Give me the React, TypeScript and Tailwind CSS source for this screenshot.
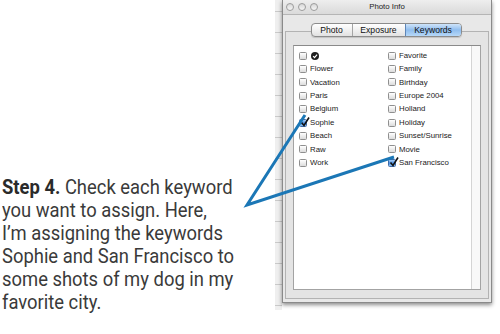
import React from 'react';

const leftKeywords = ['__check', 'Flower', 'Vacation', 'Paris', 'Belgium', 'Sophie', 'Beach', 'Raw', 'Work'];
const rightKeywords = ['Favorite', 'Family', 'Birthday', 'Europe 2004', 'Holland', 'Holiday', 'Sunset/Sunrise', 'Movie', 'San Francisco'];
const checked = ['Sophie', 'San Francisco'];

function CheckBox({ on }: { on: boolean }) {
  if (on) {
    return (
      <div className="relative w-[8px] h-[8px] rounded-[1.5px] border border-[#3d6aa8] bg-gradient-to-b from-[#a9cdf3] via-[#4b8ee0] to-[#8cc0f0]">
        <svg viewBox="0 0 10 10" className="absolute -top-[3px] left-[0px] w-[10px] h-[10px]">
          <path d="M1.5 5.5 L4 8.5 L9 0.5" fill="none" stroke="#111" strokeWidth="1.6" />
        </svg>
      </div>
    );
  }
  return (
    <div className="w-[8px] h-[8px] rounded-[1.5px] border border-[#8f8f8f] bg-gradient-to-b from-[#ffffff] to-[#dcdcdc]" />
  );
}

function KeywordRow({ label }: { label: string }) {
  const on = checked.includes(label);
  return (
    <div className="flex items-center h-[13.4px] gap-[3px]">
      <CheckBox on={on} />
      {label === '__check' ? (
        <svg viewBox="0 0 10 10" className="w-[8px] h-[8px] ml-[1px]">
          <circle cx="5" cy="5" r="5" fill="#1e1e1e" />
          <path d="M2.6 5.2 L4.4 7 L7.6 3.2" fill="none" stroke="#fff" strokeWidth="1.5" />
        </svg>
      ) : (
        <span className="text-[7.8px] text-[#1a1a1a] leading-none">{label}</span>
      )}
    </div>
  );
}

export default function App() {
  return (
    <div className="relative w-[500px] h-[334px] bg-white overflow-hidden flex font-['Liberation_Sans',Arial,sans-serif]">
      {/* Caption */}
      <div className="w-[275px] pt-[176px] pl-[2px]">
        <p className="w-[290px] origin-left scale-x-[0.92] font-['Roboto',sans-serif] text-[20px] leading-[23px] text-[#3a3a3a]">
          <span className="font-bold text-[#2a2a2a]">Step 4.</span> Check each keyword
          <br />
          you want to assign. Here,
          <br />
          I’m assigning the keywords
          <br />
          Sophie and San Francisco to
          <br />
          some shots of my dog in my
          <br />
          favorite city.
        </p>
      </div>

      {/* Window behind (ruler edge) */}
      <div className="w-[7px] h-[310px] bg-[#efefef] bg-[repeating-linear-gradient(to_bottom,transparent_0px,transparent_11px,#c9c9c9_11px,#c9c9c9_12px,transparent_12px,transparent_21px)]" />

      {/* Photo Info window */}
      <div className="w-[210px] h-[303px] flex flex-col bg-[#e8e8e8] border-l border-r border-b border-[#8a8a8a] shadow-[0_2px_4px_rgba(0,0,0,0.45)]">
        {/* Title bar */}
        <div className="h-[15px] flex items-center relative bg-gradient-to-b from-[#eeeeee] to-[#dadada] border-b border-[#b5b5b5]">
          <div className="flex items-center gap-[4px] pl-[3px]">
            {[0, 1, 2].map((i) => (
              <div key={i} className="w-[8px] h-[8px] rounded-full border border-[#9c9c9c] bg-gradient-to-b from-[#d8d8d8] to-[#f6f6f6]" />
            ))}
          </div>
          <div className="absolute inset-0 flex items-center justify-center text-[7.8px] text-[#222]">Photo Info</div>
        </div>

        {/* Tab area */}
        <div className="relative flex-1 px-[2px] pb-[3px] pt-[16px]">
          <div className="h-full border border-[#b3b3b3] bg-[#e4e4e4] pt-[13px] px-[7px] pb-[8px]">
            <div className="h-full flex bg-white border border-[#a3a3a3] border-t-[#8a8a8a]">
              <div className="flex-1 flex pl-[5px] pt-[3px]">
                <div className="w-[89px] flex flex-col">
                  {leftKeywords.map((k) => (
                    <KeywordRow key={k} label={k} />
                  ))}
                </div>
                <div className="flex flex-col">
                  {rightKeywords.map((k) => (
                    <KeywordRow key={k} label={k} />
                  ))}
                </div>
              </div>
              <div className="w-[9px] border-l border-[#d4d4d4] bg-[#f8f8f8]" />
            </div>
          </div>

          {/* Segmented tab control */}
          <div className="absolute top-[8px] left-0 right-0 flex justify-center">
            <div className="ml-[-2px] flex h-[14px] rounded-[4px] border border-[#8c8c8c] overflow-hidden bg-gradient-to-b from-[#ffffff] to-[#e2e2e2] text-[8.6px] text-[#111] shadow-[0_1px_1px_rgba(0,0,0,0.15)]">
              <div className="w-[40px] flex items-center justify-center">Photo</div>
              <div className="w-[53px] flex items-center justify-center border-l border-[#a5a5a5]">Exposure</div>
              <div className="w-[56px] flex items-center justify-center border-l border-[#5d86b8] bg-gradient-to-b from-[#cfe4f9] via-[#8fbdee] to-[#b6d8f8]">Keywords</div>
            </div>
          </div>
        </div>
      </div>

      {/* Callout lines */}
      <svg className="absolute inset-0 pointer-events-none" width="500" height="334">
        <polyline
          points="305,115 247,205 394,157"
          fill="none"
          stroke="#1b77b6"
          strokeWidth="3"
          strokeLinejoin="miter"
          strokeMiterlimit="10"
        />
      </svg>
    </div>
  );
}
